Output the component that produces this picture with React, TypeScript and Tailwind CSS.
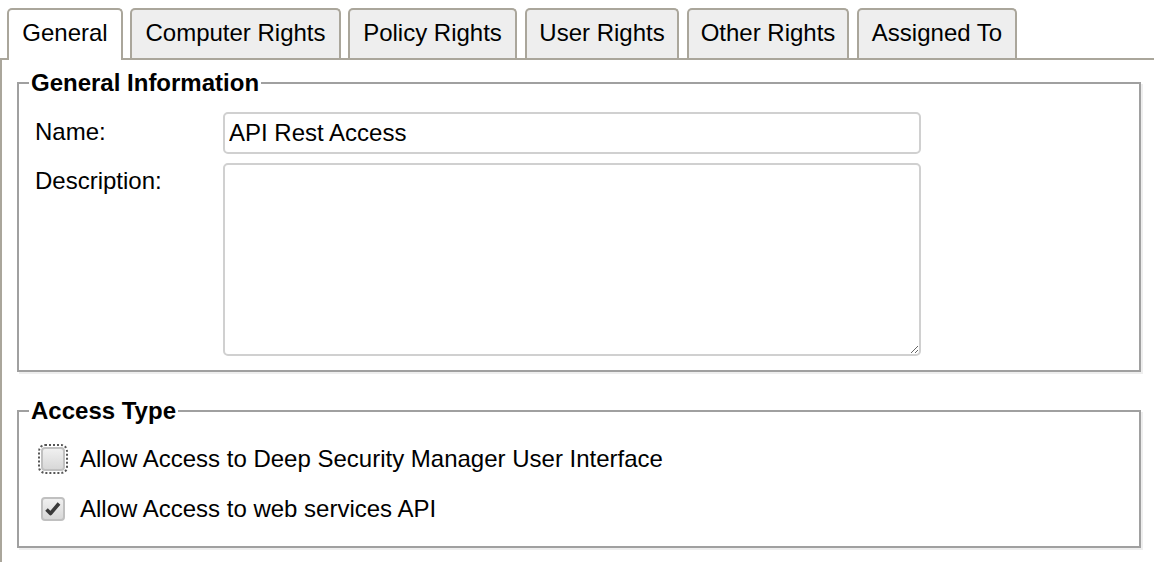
import React from "react";

const tabs: { label: string; w: string; gap: string }[] = [
  { label: "General", w: "w-[116px]", gap: "ml-[7px]" },
  { label: "Computer Rights", w: "w-[211px]", gap: "ml-[7px]" },
  { label: "Policy Rights", w: "w-[169px]", gap: "ml-[7px]" },
  { label: "User Rights", w: "w-[154px]", gap: "ml-[8px]" },
  { label: "Other Rights", w: "w-[162px]", gap: "ml-[8px]" },
  { label: "Assigned To", w: "w-[160px]", gap: "ml-[8px]" },
];

function Checkbox({ checked, focused }: { checked?: boolean; focused?: boolean }) {
  return (
    <span
      className={
        "flex h-[24px] w-[24px] shrink-0 items-center justify-center rounded-[4px] border-2 border-[#c0c0c0] bg-gradient-to-b from-[#f0f0f0] to-[#d8d8d8] " +
        (focused ? "outline-2 outline-dotted outline-[#555] outline-offset-[1px]" : "")
      }
    >
      {checked && (
        <svg width="20" height="20" viewBox="0 0 20 20">
          <path d="M3.5 10.5 L7.5 14.5 L16 4.5" fill="none" stroke="#3a3a3a" strokeWidth="3.6" strokeLinejoin="round" />
        </svg>
      )}
    </span>
  );
}

export default function App() {
  return (
    <div
      className="h-[562px] w-[1154px] overflow-hidden bg-white text-[24px] text-black"
      style={{ fontFamily: '"Liberation Sans", Arial, sans-serif' }}
    >
      <div className="flex items-end border-b-2 border-[#aaa69b] pt-[8px]">
        {tabs.map((t, i) =>
          i === 0 ? (
            <div
              key={t.label}
              className={`${t.gap} ${t.w} relative z-10 -mb-[2px] flex h-[52px] justify-center rounded-t-[5px] border-2 border-b-0 border-[#aaa69b] bg-white pt-[9px] leading-[28px]`}
            >
              {t.label}
            </div>
          ) : (
            <div
              key={t.label}
              className={`${t.gap} ${t.w} flex h-[50px] justify-center rounded-t-[5px] border-2 border-b-0 border-[#aaa69b] bg-[#eeeeee] pt-[9px] leading-[28px]`}
            >
              {t.label}
            </div>
          )
        )}
      </div>
      <div className="h-[502px] border-l-2 border-[#aaa69b] pt-[10px]">
        <fieldset className="ml-[15px] mr-[13px] border-2 border-[#a0a0a0] pb-[14px] pt-[16px] shadow-[2px_2px_0_#eeeeee]">
          <legend className="ml-[10px] bg-white px-[2px] text-[24px] font-bold leading-[26px]">General Information</legend>
          <div className="grid grid-cols-[188px_698px] gap-y-[9px] pl-[16px]">
            <div className="pt-[6px] leading-[28px]">Name:</div>
            <input
              readOnly
              value="API Rest Access"
              className="h-[42px] w-[698px] rounded-[5px] border-2 border-[#d0d0d0] px-[4px] text-[24px] leading-[28px] outline-none"
              style={{ fontFamily: '"Liberation Sans", Arial, sans-serif' }}
            />
            <div className="pt-[4px] leading-[28px]">Description:</div>
            <textarea
              readOnly
              className="block h-[193px] w-[698px] rounded-[5px] border-2 border-[#d0d0d0] px-[4px] text-[24px] outline-none"
            />
          </div>
        </fieldset>
        <fieldset className="ml-[15px] mr-[13px] mt-[26px] border-2 border-[#a0a0a0] pb-[12px] pt-[10px] shadow-[2px_2px_0_#eeeeee]">
          <legend className="ml-[10px] bg-white px-[2px] text-[24px] font-bold leading-[26px]">Access Type</legend>
          <div className="pl-[22px]">
            <div className="flex h-[50px] items-center gap-[15px] leading-[28px]">
              <Checkbox focused />
              <span>Allow Access to Deep Security Manager User Interface</span>
            </div>
            <div className="flex h-[50px] items-center gap-[15px] leading-[28px]">
              <Checkbox checked />
              <span>Allow Access to web services API</span>
            </div>
          </div>
        </fieldset>
      </div>
    </div>
  );
}
